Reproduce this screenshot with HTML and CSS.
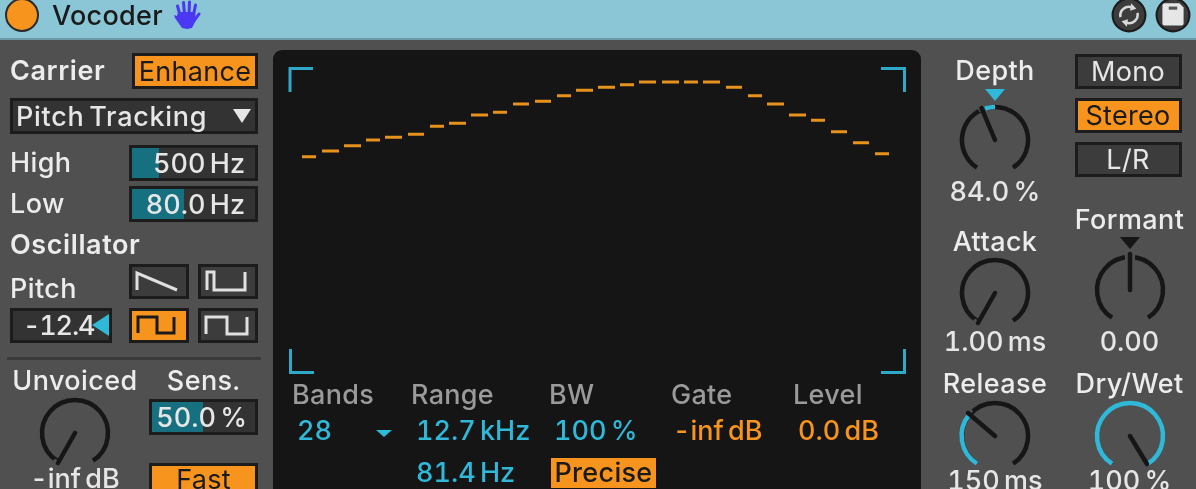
FILE: index.html
```html
<!DOCTYPE html>
<html lang="en">
<head>
<meta charset="utf-8">
<title>Vocoder</title>
<link rel="stylesheet" href="styles.css">
</head>
<body>
<div class="device">
  <header class="titlebar">
    <span class="power"></span>
    <span class="title">Vocoder</span>
    <svg class="hand" viewBox="0 0 28 30"><g fill="none" stroke="currentColor" stroke-linecap="round"><path d="M7 15 4.500 6" stroke-width="3"/><path d="M11.500 14 10.500 2.500" stroke-width="3"/><path d="M16 14 16.500 2" stroke-width="3"/><path d="M20.500 15 22.500 5" stroke-width="3"/><path d="M21 21 26 14" stroke-width="3"/></g><path fill="currentColor" d="M5 12h17l1 8-4 8-5 1-5-1-7-10-1-3 3 1z"/></svg>
    <span class="spacer"></span>
    <svg class="round" viewBox="0 0 34 34"><circle cx="17" cy="17" r="15.500" fill="#3c3c3c" stroke="#1c1c1c" stroke-width="2"/><g fill="none" stroke="#d8d8d8" stroke-width="2.400"><path d="M9 19a8 8 0 0 1 11-9"/><path d="M25 15a8 8 0 0 1-11 9"/></g><path fill="#d8d8d8" d="m19 6 5 5-6 2zM15 28l-5-5 6-2z"/></svg>
    <svg class="round" viewBox="0 0 34 34"><circle cx="17" cy="17" r="15.500" fill="#3c3c3c" stroke="#1c1c1c" stroke-width="2"/><path fill="#e6e6e6" d="M9 6h14l4 4v15a2 2 0 0 1-2 2H9a2 2 0 0 1-2-2V8a2 2 0 0 1 2-2z"/><rect x="13" y="9" width="8" height="3" fill="#555"/></svg>
  </header>

  <main class="body">
    <section class="left">
      <div class="row carrier-row">
        <span class="label">Carrier</span>
        <button class="btn on enhance">Enhance</button>
      </div>
      <div class="select"><span>Pitch Tracking</span><i class="down"></i></div>
      <div class="row high-row">
        <span class="label light">High</span>
        <div class="num range-num" style="--v:27px"><span>500 Hz</span></div>
      </div>
      <div class="row low-row">
        <span class="label light">Low</span>
        <div class="num range-num" style="--v:52px"><span>80.0 Hz</span></div>
      </div>
      <div class="label osc">Oscillator</div>
      <div class="osc-grid">
        <span class="label light pitch-label">Pitch</span>
        <button class="btn wave"><svg viewBox="0 0 60 34"><path d="M8 26V9l40 17"/></svg></button>
        <button class="btn wave"><svg viewBox="0 0 60 34"><path d="M9 26V8h7v18h31V8"/></svg></button>
        <div class="pitch-box"><span>-12.4</span><i class="left-tri"></i></div>
        <button class="btn wave on"><svg viewBox="0 0 60 34"><path d="M9 25V9h19v16h17V9"/></svg></button>
        <button class="btn wave"><svg viewBox="0 0 60 34"><path d="M8 26V9h21v17h20V9"/></svg></button>
      </div>
      <div class="divider"></div>
      <div class="unvoiced">
        <div class="col center">
          <span class="label light">Unvoiced</span>
          <svg class="knob uv-knob" viewBox="0 0 80 80"><path class="arc" d="M22 67.700A33 33 0 1 1 58 67.700"/><path class="gap" d="M24 68 21 73"/><path class="needle" d="M40 40 23 70"/></svg>
          <span class="value v-d">-inf dB</span>
        </div>
        <div class="col sens">
          <span class="label light">Sens.</span>
          <div class="num sens-num" style="--v:51px"><span>50.0 %</span></div>
          <button class="btn on fast">Fast</button>
        </div>
      </div>
    </section>

    <section class="panel">
      <svg class="spectrum" viewBox="0 0 648 330">
        <g class="brackets">
          <path d="M17 42V18.500H40"/><path d="M608 18.500H631.500V42"/><path d="M17.500 299V322.500H41"/><path d="M608 322.500H631.500V299"/>
        </g>
        <g class="dashes">
          <path d="M29 106.700h14M49 101h17M71 95.700h17M93 90h14M112 87.300h17M135 84.300h16M157 76.300h14M176 73.300h17M198 65h17M220 62.300h14M240 54h16M262 51.300h16M284 45.700h14M303 40.300h17M325 37.300h17M347 34.700h14M366 32h17M389 32h17M411 32h14M430 32h17M453 37.300h16M475 45.700h14M494 54h17M516 65h17M538 70.300h14M558 81.700h16M580 92.700h16M602 103.700h14"/>
        </g>
      </svg>
      <div class="readouts">
        <div class="rcol bands">
          <span class="rlabel">Bands</span>
          <div class="bands-val"><span class="rval cyan">28</span><i class="mini-down"></i></div>
        </div>
        <div class="rcol range">
          <span class="rlabel">Range</span>
          <span class="rval cyan">12.7 kHz</span>
          <span class="rval cyan">81.4 Hz</span>
        </div>
        <div class="rcol bw">
          <span class="rlabel">BW</span>
          <span class="rval cyan">100 %</span>
          <span class="precise">Precise</span>
        </div>
        <div class="rcol gate">
          <span class="rlabel">Gate</span>
          <span class="rval orange hy">-inf dB</span>
        </div>
        <div class="rcol level">
          <span class="rlabel">Level</span>
          <span class="rval orange">0.0 dB</span>
        </div>
      </div>
    </section>

    <section class="right">
      <div class="col center col-a">
        <span class="label light">Depth</span>
        <i class="tri cyan-tri"></i>
        <svg class="knob k-depth" viewBox="0 0 80 80"><path class="arc" d="M22 67.700A33 33 0 0 1 40 7"/><path class="gap" d="M29 10 26.500 5"/><path class="arc cy" d="M40 7A33 33 0 0 0 30 8.500"/><path class="arc" d="M40 7A33 33 0 0 1 58 67.700"/><path class="needle" d="M40 40 26.500 8"/></svg>
        <span class="value v-a">84.0 %</span>
        <span class="label light attack">Attack</span>
        <svg class="knob k-attack" viewBox="0 0 80 80"><path class="arc" d="M22 67.700A33 33 0 1 1 58 67.700"/><path class="gap" d="M24 68 21 73"/><path class="needle" d="M40 40 23 70"/></svg>
        <span class="value v-b">1.00 ms</span>
        <span class="label light release">Release</span>
        <svg class="knob k-release" viewBox="0 0 80 80"><path class="arc" d="M22 67.700A33 33 0 1 1 58 67.700"/><path class="gap" d="M15 19 9 14"/><path class="arc cy" d="M22 67.700A33 33 0 0 1 14 19"/><path class="needle" d="M40 40 13 17"/></svg>
        <span class="value v-c">150 ms</span>
      </div>
      <div class="col center col-b">
        <button class="btn stack first">Mono</button>
        <button class="btn stack on">Stereo</button>
        <button class="btn stack">L/R</button>
        <span class="label light formant">Formant</span>
        <i class="tri dark-tri"></i>
        <svg class="knob k-formant" viewBox="0 0 80 80"><path class="arc" d="M22 67.700A33 33 0 1 1 58 67.700"/><path class="gap" d="M40 12V2"/><path class="needle" d="M40 40V4"/></svg>
        <span class="value v-a">0.00</span>
        <span class="label light release">Dry/Wet</span>
        <svg class="knob k-release" viewBox="0 0 80 80"><path class="arc cy" d="M22 67.700A33 33 0 1 1 58 67.700"/><path class="needle" d="M40 40 57 68"/></svg>
        <span class="value v-c">100 %</span>
      </div>
    </section>
  </main>
</div>
</body>
</html>
```
FILE: styles.css
```css
* { box-sizing: border-box; }
html, body { margin: 0; padding: 0; background: #505050; }
body { width: 1196px; height: 489px; overflow: hidden; }
.device {
  width: 1196px; height: 489px; overflow: hidden; background: #505050;
  font-family: Inter, "Liberation Sans", sans-serif; font-size: 27px; word-spacing: -3px; letter-spacing: 0.3px;
  font-variant-numeric: tabular-nums; color: #e6e6e6;
  filter: blur(0.5px);
}
.titlebar {
  height: 40px; background: #8ac6d6; border-bottom: 2px solid #6c9aa6;
  display: flex; align-items: center; padding: 0 5px 8px 5px; color: #1a1a1a;
}
.power { width: 34px; height: 34px; border-radius: 50%; background: #f7941e; border: 2px solid #2a2a2a; flex: none; }
.title { margin-left: 13px; font-weight: 500; }
.hand { width: 28px; height: 30px; margin-left: 10px; color: #4a38f2; }
.spacer { flex: 1; }
.round { width: 36px; height: 36px; margin-left: 8px; flex: none; }

.body { display: flex; height: 449px; }
.left { width: 273px; flex: none; padding: 13px 15px 0 10px; display: flex; flex-direction: column; }
.left > * { flex: none; }
.row { display: flex; justify-content: space-between; align-items: center; }
.label { font-weight: 600; line-height: 30px; color: #ececec; white-space: nowrap; letter-spacing: 0.6px; }
.label.light { font-weight: 500; letter-spacing: 0.4px; }
.btn {
  font: inherit; letter-spacing: inherit; word-spacing: inherit; color: #e6e6e6; background: #3c3c3c; border: 3px solid #1c1c1c;
  padding: 0; display: flex; align-items: center; justify-content: center; line-height: 1;
}
.btn.on { background: #f7941e; color: #1a1a1a; }
.enhance { width: 126px; height: 36px; }
.select {
  height: 36px; margin-top: 9px; background: #333; border: 3px solid #1c1c1c; letter-spacing: 0.7px;
  display: flex; align-items: center; justify-content: space-between; padding: 0 4px 0 3px; font-weight: 500;
}
.down { width: 0; height: 0; border-left: 9px solid transparent; border-right: 9px solid transparent; border-top: 14px solid #e6e6e6; }
.high-row { margin-top: 11px; }
.low-row { margin-top: 5px; }
.num {
  width: 129px; height: 36px; background: #333; border: 3px solid #1c1c1c;
  background-image: linear-gradient(#17707f, #17707f); background-repeat: no-repeat;
  background-size: var(--v) 100%; font-weight: 500; letter-spacing: 0;
  display: flex; align-items: center; justify-content: flex-end; padding-right: 10px;
}
.osc { margin-top: 8px; }
.osc-grid {
  display: grid; grid-template-columns: 102px 17px 60px 9px 60px; grid-template-rows: 35px 35px;
  row-gap: 9px; margin-top: 4px;
}
.osc-grid > :nth-child(1) { grid-column: 1; grid-row: 1; align-self: end; line-height: 30px; margin-bottom: -5px; }
.osc-grid > :nth-child(2) { grid-column: 3; grid-row: 1; }
.osc-grid > :nth-child(3) { grid-column: 5; grid-row: 1; }
.osc-grid > :nth-child(4) { grid-column: 1; grid-row: 2; }
.osc-grid > :nth-child(5) { grid-column: 3; grid-row: 2; }
.osc-grid > :nth-child(6) { grid-column: 5; grid-row: 2; }
.wave svg { position: absolute; left: -3px; top: -3px; width: 60px; height: 34px; fill: none; stroke: #e0e0e0; stroke-width: 3; }
.wave { position: relative; }
.wave.on svg { stroke: #1a1a1a; }
.pitch-box {
  position: relative; background: #333; border: 3px solid #1c1c1c; display: flex; align-items: center;
  padding-left: 10px; font-weight: 500; letter-spacing: -1.2px;
}
.left-tri { position: absolute; right: 0; top: 3px; width: 0; height: 0; border-top: 11px solid transparent; border-bottom: 11px solid transparent; border-right: 17px solid #2fb8d8; }
.divider { height: 3px; background: #3a3a3a; margin: 14px -3px 0 -3px; }
.unvoiced { display: flex; justify-content: space-between; margin-top: 6px; }
.col { display: flex; flex-direction: column; }
.center { align-items: center; }
.sens { width: 109px; align-items: center; }
.sens-num { width: 109px; margin-top: 3px; padding-right: 8px; }
.fast { width: 109px; height: 36px; margin-top: 28px; padding-bottom: 3px; }
.unvoiced > .center { width: 130px; }
.uv-knob { margin-top: -3px; }
.knob { width: 80px; height: 80px; flex: none; display: block; }
.knob path { fill: none; }
.arc { stroke: #161616; stroke-width: 4.500; }
.arc.cy { stroke: #2fb8d8; }
.gap { stroke: #505050; stroke-width: 10; }
.needle { stroke: #161616; stroke-width: 4.500; stroke-linecap: round; }
.value { font-weight: 500; line-height: 30px; white-space: nowrap; letter-spacing: 0; }
.v-a { margin-top: -3px; }
.v-b { margin-top: -6px; }
.v-c { margin-top: -10px; }
.v-d { margin-top: -9px; }

.panel {
  width: 648px; flex: none; margin-top: 10px; background: #151515; border-radius: 9px 9px 0 0;
  display: flex; flex-direction: column; height: 460px;
}
.spectrum { width: 648px; height: 330px; flex: none; display: block; }
.brackets path { fill: none; stroke: #2fa9c8; stroke-width: 3; }
.dashes path { fill: none; stroke: #e8921e; stroke-width: 3; }
.readouts { display: flex; padding-left: 19px; }
.rcol { display: flex; flex-direction: column; flex: none; }
.bands { width: 119px; }
.range { width: 138px; }
.bw { width: 122px; }
.gate { width: 122px; }
.rlabel { color: #9a9a9a; line-height: 30px; font-weight: 500; }
.rval { line-height: 30px; margin-top: 6px; margin-left: 5px; font-weight: 500; white-space: nowrap; letter-spacing: 0; }
.hy { margin-left: 2px; }
.cyan { color: #2fb8d8; }
.orange { color: #f7941e; }
.bands-val { display: flex; align-items: center; width: 100px; }
.mini-down { width: 0; height: 0; margin: 10px 0 0 auto; border-left: 8px solid transparent; border-right: 8px solid transparent; border-top: 7px solid #2fb8d8; }
.range .rval + .rval { margin-top: 12px; }
.precise { background: #f7941e; color: #1a1a1a; width: 105px; height: 30px; line-height: 30px; margin-top: 12px; margin-left: 2px; text-align: center; font-weight: 500; }

.right { flex: 1; display: flex; padding-top: 16px; }
.col-a { width: 100px; margin-left: 24px; }
.col-b { width: 115px; margin-left: 27px; }
.tri { display: block; width: 0; height: 0; flex: none; border-left: 10px solid transparent; border-right: 10px solid transparent; border-top: 12px solid; }
.cyan-tri { border-top-color: #2fb8d8; margin-top: 3px; }
.dark-tri { border-top-color: #161616; margin-top: 2px; }
.k-depth { margin-top: -1px; }
.attack { margin-top: 20px; }
.k-attack { margin-top: -4px; }
.k-release { margin-top: -3px; }
.release { margin-top: 12px; }
.stack { width: 107px; height: 35px; margin: 0 3px 9px 0; flex: none; }
.first { margin-top: -2px; }
.formant { margin-top: 19px; }
.k-formant { margin-top: 1px; }
```
